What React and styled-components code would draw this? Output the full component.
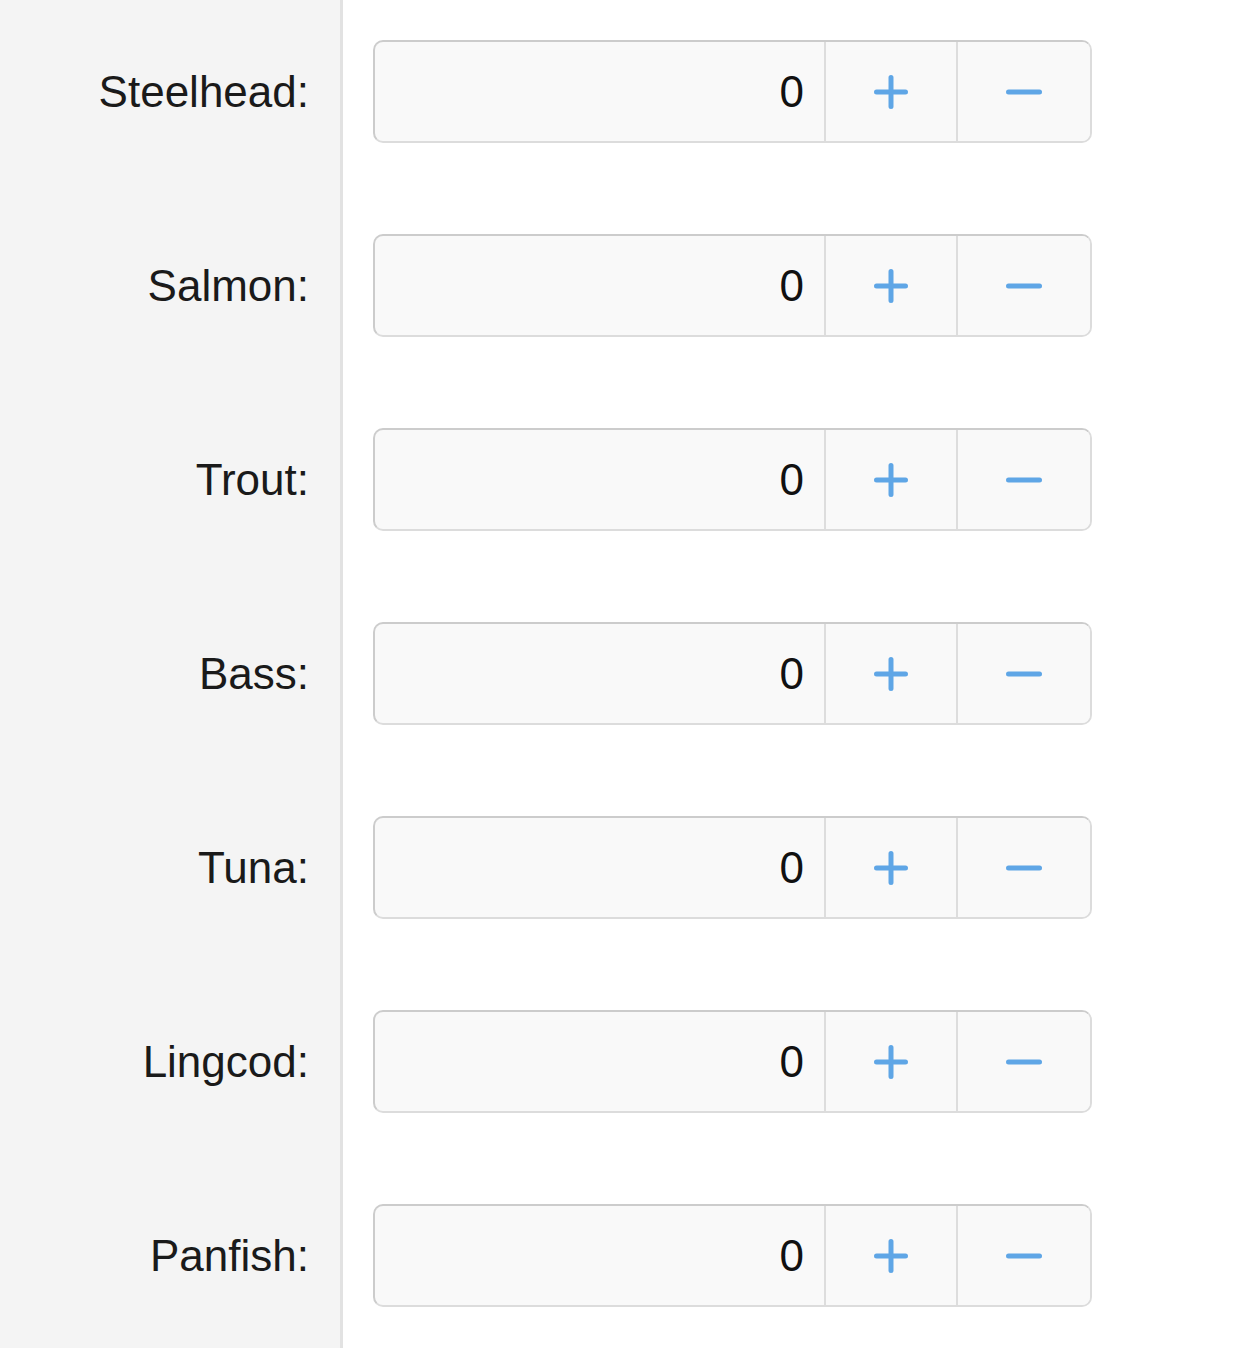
import React from "react";
import styled, { createGlobalStyle } from "styled-components";

const GlobalStyle = createGlobalStyle`
  html, body {
    margin: 0;
    padding: 0;
    background: #ffffff;
    font-family: "Liberation Sans", Arial, sans-serif;
  }
`;

const Page = styled.div`
  display: flex;
  min-height: 1348px;
`;

const Sidebar = styled.div`
  width: 343px;
  background: #f4f4f4;
  border-right: 3px solid #e2e2e2;
  box-sizing: border-box;
  padding: 40px 31px 0 0;
  display: flex;
  flex-direction: column;
  gap: 91px;
`;

const Label = styled.div`
  height: 103px;
  display: flex;
  align-items: center;
  justify-content: flex-end;
  font-size: 44px;
  color: #1a1a1a;
`;

const Main = styled.div`
  padding: 40px 0 0 30px;
  display: flex;
  flex-direction: column;
  gap: 91px;
`;

const Stepper = styled.div`
  display: flex;
  width: 719px;
  height: 103px;
  box-sizing: border-box;
  border: 2px solid #dcdcdc;
  border-top-color: #cccccc;
  border-left-color: #cccccc;
  border-radius: 10px;
  background: #f9f9f9;
  overflow: hidden;
`;

const Value = styled.div`
  width: 449px;
  display: flex;
  align-items: center;
  justify-content: flex-end;
  padding-right: 20px;
  box-sizing: border-box;
  font-size: 44px;
  color: #111;
`;

const StepButton = styled.button`
  width: ${(p) => p.$w}px;
  border: 0;
  border-left: 2px solid #dddddd;
  background: #f9f9f9;
  display: flex;
  align-items: center;
  justify-content: center;
  padding: 0;
  cursor: pointer;
`;

const Plus = () => (
  <svg width="34" height="34" viewBox="0 0 34 34">
    <path d="M17 2.5v29M2.5 17h29" stroke="#5fa6e6" strokeWidth="5" strokeLinecap="round" />
  </svg>
);

const Minus = () => (
  <svg width="36" height="34" viewBox="0 0 36 34">
    <path d="M2.5 17h31" stroke="#5fa6e6" strokeWidth="5" strokeLinecap="round" />
  </svg>
);

const fish = ["Steelhead", "Salmon", "Trout", "Bass", "Tuna", "Lingcod", "Panfish"];

export default function App() {
  return (
    <>
      <GlobalStyle />
      <Page>
        <Sidebar>
          {fish.map((f) => (
            <Label key={f}>{f}:</Label>
          ))}
        </Sidebar>
        <Main>
          {fish.map((f) => (
            <Stepper key={f}>
              <Value>0</Value>
              <StepButton $w={132}>
                <Plus />
              </StepButton>
              <StepButton $w={134}>
                <Minus />
              </StepButton>
            </Stepper>
          ))}
        </Main>
      </Page>
    </>
  );
}
